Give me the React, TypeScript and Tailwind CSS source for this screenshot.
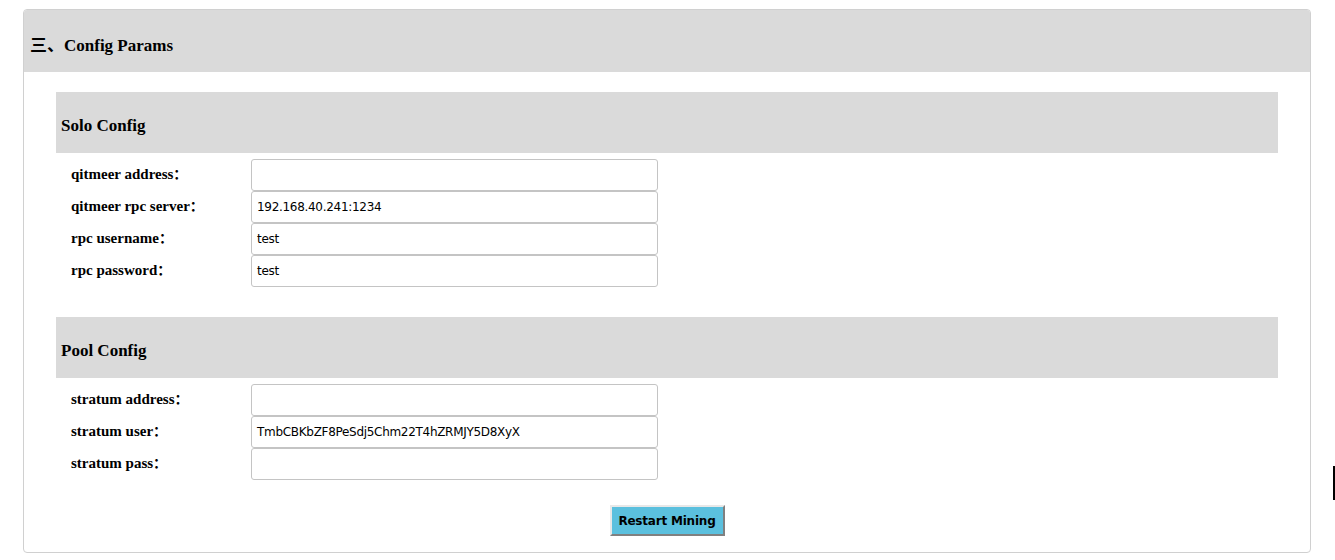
import React from "react";

const serif = { fontFamily: '"Liberation Serif", "Noto Sans CJK SC", serif' };

function Row({ label, value }: { label: string; value: string }) {
  return (
    <div className="flex items-center h-[32px]">
      <div className="w-[195px] pl-[15px] pb-[2px] text-[15px] font-bold text-black" style={serif}>
        {label}
        <span className="text-[14px]">：</span>
      </div>
      <div className="w-[407px] h-[32px] border border-[#c4c4c4] rounded-[3px] bg-white flex items-center pl-[5px] text-[12px] text-black font-['DejaVu_Sans',sans-serif] tracking-[-0.3px]">
        {value}
      </div>
    </div>
  );
}

function Section({ title, rows }: { title: string; rows: [string, string][] }) {
  return (
    <div>
      <div className="h-[61px] bg-[#dadada] flex items-center pl-[5px] pt-[6px]">
        <span className="text-[17px] font-bold text-black" style={serif}>{title}</span>
      </div>
      <div className="pt-[6px]">
        {rows.map(([l, v]) => (
          <Row key={l} label={l} value={v} />
        ))}
      </div>
    </div>
  );
}

export default function App() {
  return (
    <div className="relative w-[1335px] h-[560px] bg-white overflow-hidden">
      <div className="ml-[23px] mr-[24px] mt-[9px] h-[544px] border border-[#d0d0d0] rounded-[4px] overflow-hidden">
        <div className="h-[62px] bg-[#dadada] flex items-center pl-[6px] pt-[10px]">
          <span className="text-[17px] font-bold text-black" style={serif}>三、Config Params</span>
        </div>
        <div className="mx-[32px] mt-[20px]">
          <Section
            title="Solo Config"
            rows={[
              ["qitmeer address", ""],
              ["qitmeer rpc server", "192.168.40.241:1234"],
              ["rpc username", "test"],
              ["rpc password", "test"],
            ]}
          />
          <div className="h-[30px]" />
          <Section
            title="Pool Config"
            rows={[
              ["stratum address", ""],
              ["stratum user", "TmbCBKbZF8PeSdj5Chm22T4hZRMJY5D8XyX"],
              ["stratum pass", ""],
            ]}
          />
          <div className="flex justify-center mt-[25px]">
            <button className="w-[115px] h-[31px] bg-[#5bc0de] border-2 border-t-[#e8e8e8] border-l-[#e8e8e8] border-r-[#808080] border-b-[#808080] text-[12px] font-bold text-black font-['DejaVu_Sans',sans-serif] tracking-[-0.2px]">
              Restart Mining
            </button>
          </div>
        </div>
      </div>
      <div className="absolute left-[1333px] top-[466px] w-[2px] h-[34px] bg-black" />
    </div>
  );
}
